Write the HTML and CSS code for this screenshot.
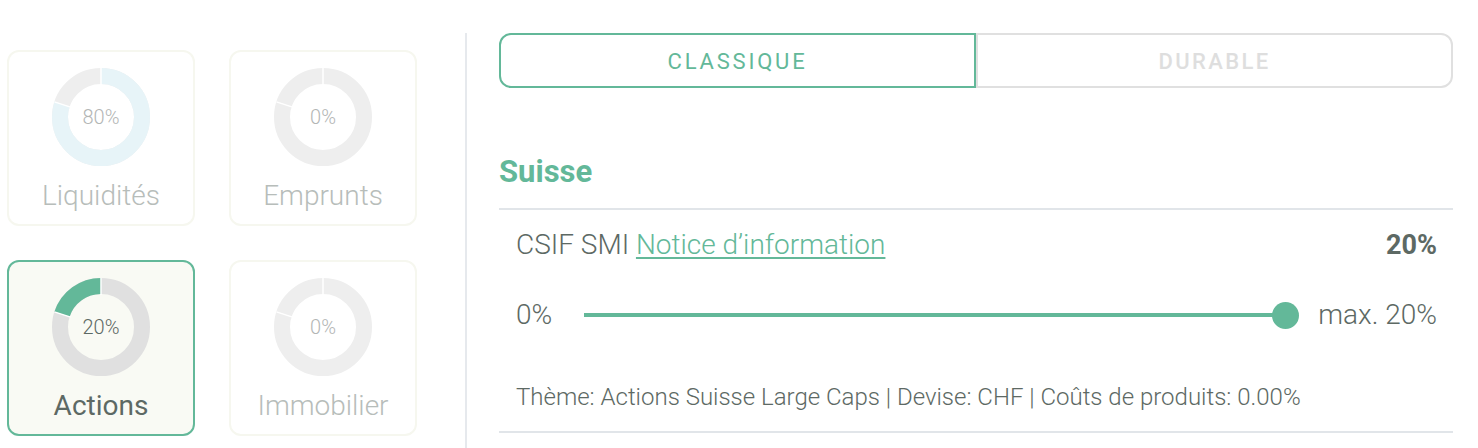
FILE: index.html
```html
<html>
    <head>
        <title>Allocation</title>
        <link rel="stylesheet" href="styles.css">
    </head>
    <body>
        <div class="page">
            <div class="classes">
                <div class="card">
                    <svg class="donut" viewBox="0 0 98 98" width="98" height="98">
                        <circle cx="49" cy="49" r="41" class="ring ring-light"></circle>
                        <circle cx="49" cy="49" r="41" class="seg seg-cash" stroke-dasharray="206.1 300" transform="rotate(-90 49 49)"></circle>
                        <line x1="49" y1="0" x2="49" y2="17" class="sep"></line>
                        <line x1="49" y1="0" x2="49" y2="17" class="sep" transform="rotate(-72 49 49)"></line>
                        <text x="49" y="56" class="pct">80%</text>
                    </svg>
                    <span class="label">Liquidités</span>
                </div>
                <div class="card">
                    <svg class="donut" viewBox="0 0 98 98" width="98" height="98">
                        <circle cx="49" cy="49" r="41" class="ring ring-light"></circle>
                        <line x1="49" y1="0" x2="49" y2="17" class="sep"></line>
                        <line x1="49" y1="0" x2="49" y2="17" class="sep" transform="rotate(-72 49 49)"></line>
                        <text x="49" y="56" class="pct">0%</text>
                    </svg>
                    <span class="label">Emprunts</span>
                </div>
                <div class="card active">
                    <svg class="donut" viewBox="0 0 98 98" width="98" height="98">
                        <circle cx="49" cy="49" r="41" class="ring ring-mid"></circle>
                        <circle cx="49" cy="49" r="41" class="seg seg-green" stroke-dasharray="51.5 300" transform="rotate(198 49 49)"></circle>
                        <line x1="49" y1="0" x2="49" y2="17" class="sep"></line>
                        <line x1="49" y1="0" x2="49" y2="17" class="sep" transform="rotate(-72 49 49)"></line>
                        <text x="49" y="56" class="pct">20%</text>
                    </svg>
                    <span class="label">Actions</span>
                </div>
                <div class="card">
                    <svg class="donut" viewBox="0 0 98 98" width="98" height="98">
                        <circle cx="49" cy="49" r="41" class="ring ring-light"></circle>
                        <line x1="49" y1="0" x2="49" y2="17" class="sep"></line>
                        <line x1="49" y1="0" x2="49" y2="17" class="sep" transform="rotate(-72 49 49)"></line>
                        <text x="49" y="56" class="pct">0%</text>
                    </svg>
                    <span class="label">Immobilier</span>
                </div>
            </div>

            <div class="details">
                <div class="toggle">
                    <button class="tab tab-on">CLASSIQUE</button>
                    <button class="tab tab-off">DURABLE</button>
                </div>

                <h2 class="region">Suisse</h2>

                <div class="fund">
                    <div class="fund-head">
                        <span>CSIF SMI <a href="#" class="notice">Notice d’information</a></span>
                        <strong>20%</strong>
                    </div>
                    <div class="slider">
                        <span class="min">0%</span>
                        <div class="track">
                            <span class="thumb"></span>
                        </div>
                        <span class="max">max. 20%</span>
                    </div>
                    <p class="meta">Thème: Actions Suisse Large Caps | Devise: CHF | Coûts de produits: 0.00%</p>
                </div>
            </div>
        </div>
    </body>
</html>
```

FILE: styles.css
```css
body {
    margin: 0;
    font-family: Roboto, "Liberation Sans", sans-serif;
    color: #5d6964;
    background: #ffffff;
}
.page {
    display: flex;
    min-height: 100vh;
}
.classes {
    display: grid;
    grid-template-columns: 188px 188px;
    grid-auto-rows: 176px;
    column-gap: 34px;
    row-gap: 34px;
    padding: 50px 0 0 7px;
    width: 458px;
    align-content: start;
}
.card {
    box-sizing: border-box;
    border: 2px solid #f6f7ef;
    border-radius: 12px;
    display: flex;
    flex-direction: column;
    align-items: center;
    padding-top: 16px;
}
.card.active {
    border-color: #63b899;
    background: #f9faf4;
}
.donut {
    display: block;
}
.ring, .seg {
    fill: none;
    stroke-width: 16;
}
.ring-light {
    stroke: #eeeeee;
}
.ring-mid {
    stroke: #e0e0e0;
}
.seg-cash {
    stroke: #e7f4f8;
}
.seg-green {
    stroke: #63b899;
}
.sep {
    stroke: #ffffff;
    stroke-width: 1.5;
}
.pct {
    font-family: Roboto, sans-serif;
    font-size: 20px;
    font-weight: 300;
    fill: #b3b6b5;
    text-anchor: middle;
}
.active .pct {
    fill: #5d6964;
}
.label {
    margin-top: 13px;
    font-size: 28px;
    line-height: 34px;
    font-weight: 300;
    color: #b7bdba;
}
.active .label {
    font-weight: 400;
    color: #5d6964;
}
.details {
    flex: 1;
    margin-top: 33px;
    border-left: 2px solid #e6e9ed;
    padding: 0 25px 0 32px;
}
.toggle {
    display: flex;
    height: 55px;
}
.tab {
    flex: 1;
    padding-top: 3px;
    background: #ffffff;
    font-family: Roboto, sans-serif;
    font-size: 22px;
    letter-spacing: 2.8px;
    font-weight: 400;
    cursor: pointer;
}
.tab-on {
    border: 2px solid #63b899;
    border-radius: 12px 0 0 12px;
    color: #63b899;
}
.tab-off {
    border: 2px solid #e0e0e0;
    border-radius: 0 12px 12px 0;
    color: #dedede;
    font-weight: 500;
    letter-spacing: 2.4px;
}
.region {
    margin: 65px 0 0;
    padding-bottom: 18px;
    border-bottom: 2px solid #e1e5e9;
    font-size: 31px;
    line-height: 37px;
    font-weight: 700;
    color: #63b899;
}
.fund {
    padding: 18px 16px 0 17px;
    border-bottom: 2px solid #e1e5e9;
}
.fund-head {
    display: flex;
    justify-content: space-between;
    font-size: 28px;
    line-height: 34px;
    font-weight: 300;
}
.fund-head strong {
    font-weight: 700;
    font-size: 27px;
}
.notice {
    color: #63b899;
    text-decoration-thickness: 1.5px;
    text-underline-offset: 3px;
}
.slider {
    display: flex;
    align-items: center;
    margin-top: 36px;
    font-size: 28px;
    line-height: 34px;
    font-weight: 300;
}
.min {
    width: 68px;
}
.track {
    flex: 1;
    height: 4px;
    background: #63b899;
    position: relative;
}
.thumb {
    position: absolute;
    right: -13.5px;
    top: -11.5px;
    width: 27px;
    height: 27px;
    border-radius: 50%;
    background: #63b899;
}
.max {
    margin-left: 33px;
}
.meta {
    margin: 51px 0 0;
    padding-bottom: 20px;
    font-size: 24px;
    line-height: 28px;
    font-weight: 300;
}
```
